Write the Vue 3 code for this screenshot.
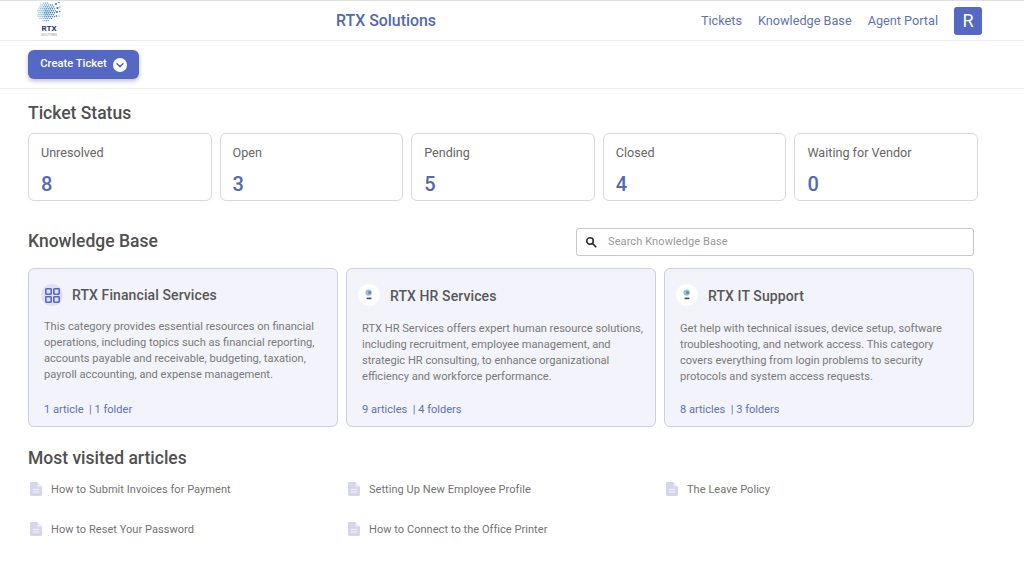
<script setup>
const stats = [
  { label: 'Unresolved', value: 8 },
  { label: 'Open', value: 3 },
  { label: 'Pending', value: 5 },
  { label: 'Closed', value: 4 },
  { label: 'Waiting for Vendor', value: 0 },
]
const categories = [
  { title: 'RTX Financial Services', icon: 'grid', text: 'This category provides essential resources on financial\noperations, including topics such as financial reporting,\naccounts payable and receivable, budgeting, taxation,\npayroll accounting, and expense management.', meta: '1 article  | 1 folder' },
  { title: 'RTX HR Services', icon: 'logo', text: 'RTX HR Services offers expert human resource solutions,\nincluding recruitment, employee management, and\nstrategic HR consulting, to enhance organizational\nefficiency and workforce performance.', meta: '9 articles  | 4 folders' },
  { title: 'RTX IT Support', icon: 'logo', text: 'Get help with technical issues, device setup, software\ntroubleshooting, and network access. This category\ncovers everything from login problems to security\nprotocols and system access requests.', meta: '8 articles  | 3 folders' },
]
const articles = [
  'How to Submit Invoices for Payment',
  'Setting Up New Employee Profile',
  'The Leave Policy',
  'How to Reset Your Password',
  'How to Connect to the Office Printer',
]
const dots = []
for (let r = 0; r < 10; r++) {
  for (let c = 0; c < 10; c++) {
    const x = 1 + c * 1.95 + (r % 2) * 0.9
    const y = 2 + r * 1.95
    const d = Math.hypot(x - 9.5, y - 11)
    if (d < 9.4) dots.push({ x, y, r: 0.98 - d * 0.035, o: x > 13 ? '#3f74ad' : x > 7 ? '#5f9ccc' : '#7fb3da' })
  }
}
const scatter = [
  [19, 3, 0.9], [22, 1.5, 0.7], [20.5, 7, 1], [23, 6, 0.6], [20, 11, 0.9], [22.8, 10.5, 0.7], [19.5, 15, 0.8], [22, 15, 0.5],
]
</script>

<template>
  <div class="page">
    <header class="topbar">
      <div class="brand">
        <svg class="globe" viewBox="0 0 24 21" aria-hidden="true">
          <circle v-for="(d, i) in dots" :key="i" :cx="d.x" :cy="d.y" :r="d.r" :fill="d.o" />
          <circle v-for="(s, i) in scatter" :key="'s' + i" :cx="s[0]" :cy="s[1]" :r="s[2]" fill="#2f5f9e" />
        </svg>
        <span class="brand-name">RTX</span>
        <span class="brand-sub">SOLUTIONS</span>
      </div>
      <div class="app-title">RTX Solutions</div>
      <nav class="nav">
        <a>Tickets</a>
        <a>Knowledge Base</a>
        <a>Agent Portal</a>
        <span class="avatar">R</span>
      </nav>
    </header>

    <div class="toolbar">
      <button class="create">
        <span class="create-label">Create Ticket</span>
        <span class="chev">
          <svg viewBox="0 0 14 14" width="14" height="14" aria-hidden="true">
            <circle cx="7" cy="7" r="7" fill="#fff" />
            <path d="M4 5.8 7 8.6l3-2.8" fill="none" stroke="#5468c4" stroke-width="1.5" stroke-linecap="round" stroke-linejoin="round" />
          </svg>
        </span>
      </button>
    </div>

    <main class="content">
      <h2 class="status-title">Ticket Status</h2>
      <section class="stats">
        <div v-for="s in stats" :key="s.label" class="stat">
          <div class="stat-label">{{ s.label }}</div>
          <div class="stat-value">{{ s.value }}</div>
        </div>
      </section>

      <section class="kb-head">
        <h2>Knowledge Base</h2>
        <label class="search">
          <svg viewBox="0 0 24 24" width="12" height="12" aria-hidden="true">
            <circle cx="10" cy="10" r="6.5" fill="none" stroke="#263238" stroke-width="3.2" />
            <path d="m15 15 6.5 6.5" stroke="#263238" stroke-width="3.4" stroke-linecap="round" />
          </svg>
          <span class="search-text">Search Knowledge Base</span>
        </label>
      </section>

      <section class="cats">
        <article v-for="c in categories" :key="c.title" class="cat" :class="{ 'cat-logo': c.icon === 'logo' }">
          <div class="cat-head">
            <span v-if="c.icon === 'grid'" class="cat-icon grid-icon">
              <svg viewBox="0 0 15 15" width="15" height="15" aria-hidden="true">
                <g fill="none" stroke="#5468c4" stroke-width="1.6">
                  <rect x="0.8" y="0.8" width="5.4" height="5.4" rx="0.6" />
                  <rect x="8.8" y="0.8" width="5.4" height="5.4" rx="0.6" />
                  <rect x="0.8" y="8.8" width="5.4" height="5.4" rx="0.6" />
                  <rect x="8.8" y="8.8" width="5.4" height="5.4" rx="0.6" />
                </g>
              </svg>
            </span>
            <span v-else class="cat-icon logo-icon">
              <svg viewBox="0 0 8 12" width="8" height="12" aria-hidden="true">
                <circle cx="3.6" cy="3.6" r="3.2" fill="#9dbfdd" />
                <circle cx="4.6" cy="3.6" r="1.6" fill="#5f8fbf" />
                <rect x="1.6" y="8.6" width="4.8" height="1.6" fill="#2c4c70" />
              </svg>
            </span>
            <h3>{{ c.title }}</h3>
          </div>
          <p>{{ c.text }}</p>
          <div class="cat-meta">{{ c.meta }}</div>
        </article>
      </section>

      <h2 class="visited-title">Most visited articles</h2>
      <section class="articles">
        <div v-for="a in articles" :key="a" class="article">
          <svg viewBox="0 0 12 14" width="12" height="14" aria-hidden="true">
            <path d="M1.4 0H7.5L12 4.5V12.6A1.4 1.4 0 0 1 10.6 14H1.4A1.4 1.4 0 0 1 0 12.6V1.4A1.4 1.4 0 0 1 1.4 0Z" fill="#d4d6ee" />
            <path d="M7.5 0 12 4.5H7.5Z" fill="#ecedf8" />
            <path d="M2.8 7.4h6.4M2.8 10h6.4" stroke="#f4f5fc" stroke-width="1" />
          </svg>
          <span>{{ a }}</span>
        </div>
      </section>
    </main>
  </div>
</template>

<style>
html, body { margin: 0; background: #fff; }
</style>

<style scoped>
.page {
  width: 1024px;
  height: 578px;
  overflow: hidden;
  box-sizing: border-box;
  font-family: Roboto, "Liberation Sans", sans-serif;
  color: #505050;
  background: #fff;
  border-top: 1px solid #e2e2e2;
}
.topbar {
  position: relative;
  height: 39px;
  display: flex;
  align-items: center;
  justify-content: space-between;
  padding: 0 42px 0 37px;
  border-bottom: 1px solid #eeeeee;
}
.brand {
  width: 24px;
  height: 39px;
  display: flex;
  flex-direction: column;
  align-items: center;
  overflow: hidden;
}
.globe { width: 24px; height: 21px; flex: none; }
.brand-name {
  font-size: 8px;
  font-weight: 700;
  line-height: 9px;
  margin-top: 2px;
  color: #1f3b63;
}
.brand-sub {
  font-size: 3px;
  line-height: 4px;
  color: #8a93a3;
  white-space: nowrap;
}
.app-title {
  position: absolute;
  left: 336px;
  top: 10px;
  font-size: 15.9px;
  line-height: 19px;
  font-weight: 500;
  color: #5468b4;
}
.nav {
  display: flex;
  align-items: center;
  font-size: 12.7px;
  color: #6272b2;
}
.nav a { margin-right: 16px; }
.avatar {
  width: 28px;
  height: 28px;
  border-radius: 3px;
  background: #5468c4;
  color: #fff;
  display: flex;
  align-items: center;
  justify-content: center;
  font-size: 18px;
}
.toolbar {
  height: 48px;
  padding: 9px 28px 0;
  box-sizing: border-box;
  border-bottom: 1px solid #eeeeee;
}
.create {
  width: 111px;
  height: 29px;
  display: flex;
  align-items: center;
  justify-content: center;
  gap: 6px;
  padding: 0;
  border: 0;
  border-radius: 6px;
  background: #5468c4;
  color: #fff;
  font: 500 11.2px Roboto, sans-serif;
  box-shadow: 0 2px 4px rgba(60, 70, 130, 0.35);
}
.create-label { margin-top: -2px; }
.chev { display: flex; }
.content { padding: 0 46px 0 28px; }
h2 {
  margin: 0;
  font-size: 17.5px;
  line-height: 21px;
  font-weight: 500;
  color: #505050;
}
.status-title { margin-top: 14px; }
.stats {
  display: grid;
  grid-template-columns: repeat(5, 1fr);
  gap: 8px;
  width: 950px;
  margin-top: 9px;
}
.stat {
  height: 68px;
  box-sizing: border-box;
  padding: 10px 12px;
  border: 1px solid #d9d9d9;
  border-radius: 6px;
}
.stat-label { font-size: 12.6px; line-height: 16px; color: #666; margin-top: 1px; }
.stat-value {
  margin-top: 11px;
  font-size: 20px;
  line-height: 24px;
  font-weight: 500;
  color: #5468b4;
}
.kb-head {
  display: flex;
  align-items: center;
  justify-content: space-between;
  margin-top: 27px;
  width: 946px;
}
.kb-head h2 { margin-bottom: 2px; }
.search {
  width: 398px;
  height: 28px;
  box-sizing: border-box;
  display: flex;
  align-items: center;
  gap: 11px;
  padding: 0 8px;
  border: 1px solid #c8c8c8;
  border-radius: 3px;
  font-size: 11px;
  color: #9a9a9a;
  letter-spacing: 0.1px;
}
.search-text { margin-bottom: 2px; }
.cats {
  display: grid;
  grid-template-columns: repeat(3, 310px);
  gap: 8px;
  margin-top: 12px;
}
.cat {
  position: relative;
  height: 159px;
  box-sizing: border-box;
  padding: 14px 10px 0 15px;
  background: #f2f3fb;
  border: 1px solid #ccd0de;
  border-radius: 6px;
}
.cat-head { display: flex; align-items: center; gap: 9px; height: 24px; margin-left: -3px; margin-bottom: 12px; }
.cat-logo .cat-head { height: 28px; margin-top: -1px; margin-left: -4px; margin-bottom: 11px; gap: 10px; }
.cat-icon {
  width: 22px;
  height: 22px;
  flex: none;
  border-radius: 50%;
  display: flex;
  align-items: center;
  justify-content: center;
}
.grid-icon { background: #dfe2f5; }
.logo-icon { background: #fff; margin-top: -3px; }
.cat-head h3 {
  margin: 0;
  font-size: 14px;
  line-height: 18px;
  font-weight: 500;
  color: #585858;
  letter-spacing: 0.1px;
}
.cat p {
  margin: 0;
  font-size: 11.1px;
  line-height: 16px;
  color: #7a7a7a;
  white-space: pre-line;
}
.cat-meta {
  position: absolute;
  left: 15px;
  bottom: 9px;
  font-size: 11.05px;
  line-height: 14px;
  color: #6272b2;
  white-space: pre;
}
.visited-title { margin-top: 21px; }
.articles {
  display: grid;
  grid-template-columns: repeat(3, 318px);
  row-gap: 26px;
  margin-top: 13px;
  padding-left: 2px;
}
.article {
  display: flex;
  align-items: center;
  gap: 9px;
  height: 14px;
  font-size: 11px;
  color: #737373;
  letter-spacing: 0.05px;
}
</style>
